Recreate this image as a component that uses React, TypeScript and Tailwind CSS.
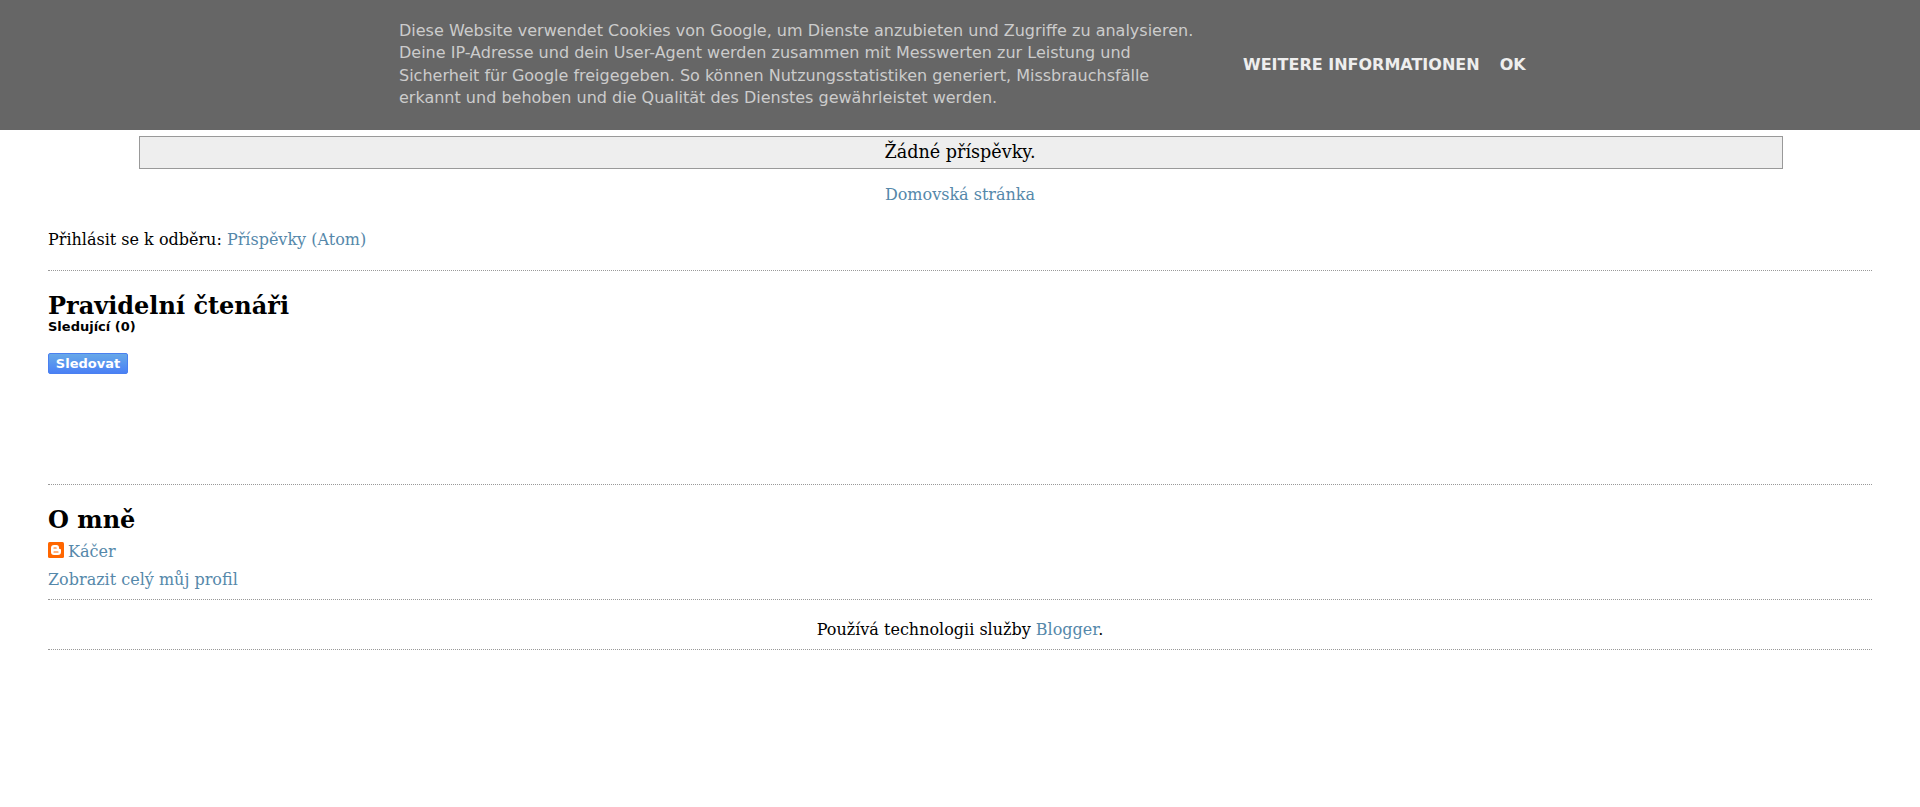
import React from 'react';

const link = 'text-[#5588aa]';

export default function App() {
  return (
    <div className="font-['DejaVu_Serif',serif] text-[16px] leading-[19px] text-black bg-white min-h-[807px]">
      <header className="h-[130px] bg-[#666] flex justify-center font-['DejaVu_Sans',sans-serif] text-[#ccc]">
        <div className="flex w-[1128px] items-start pl-[3px] pt-5">
          <p className="w-[844px] shrink-0 whitespace-nowrap leading-[22.4px]">
            Diese Website verwendet Cookies von Google, um Dienste anzubieten und Zugriffe zu analysieren.<br />
            Deine IP-Adresse und dein User-Agent werden zusammen mit Messwerten zur Leistung und<br />
            Sicherheit für Google freigegeben. So können Nutzungsstatistiken generiert, Missbrauchsfälle<br />
            erkannt und behoben und die Qualität des Dienstes gewährleistet werden.
          </p>
          <nav className="mt-[34.6px] flex gap-5 font-bold text-[#eee] whitespace-nowrap">
            <a>WEITERE INFORMATIONEN</a>
            <a>OK</a>
          </nav>
        </div>
      </header>
      <main className="px-12">
        <div className="mt-[6px] ml-[91px] mr-[89px] pr-[2px] h-[33px] border border-[#999] bg-[#eee] flex items-center justify-center text-[17.6px]">Žádné příspěvky.</div>
        <div className={`mt-4 text-center ${link}`}>Domovská stránka</div>
        <div className="mt-[26px]">Přihlásit se k odběru: <a className={link}>Příspěvky (Atom)</a></div>
        <section className="mt-[21px] h-[214px] border-t border-dotted border-[#999] pt-[21px]">
          <h2 className="text-[24px] leading-[28px] font-bold">Pravidelní čtenáři</h2>
          <div className="-mt-px font-['DejaVu_Sans',sans-serif] text-[13px] leading-[16px] font-bold">Sledující (0)</div>
          <button className="mt-[18px] block h-[21px] w-[80px] rounded-[2px] border border-[#4a80f0] bg-linear-to-b from-[#68a8e8] to-[#4a80f5] font-['DejaVu_Sans',sans-serif] text-[13px] leading-[19px] font-bold text-white">Sledovat</button>
        </section>
        <section className="h-[115px] border-t border-dotted border-[#999] pt-[21px]">
          <h2 className="text-[24px] leading-[28px] font-bold">O mně</h2>
          <a className={`mt-[8px] flex items-start gap-1 ${link}`}>
            <svg width="16" height="16" viewBox="0 0 16 16"><rect width="16" height="16" rx="1.5" fill="#f60" /><path d="M6 3h2.5A2.5 2.5 0 0 1 11 5.5c0 1.3.3 1.5 1.2 1.5q.8 0 .8 1v2a3 3 0 0 1-3 3H6a3 3 0 0 1-3-3V6a3 3 0 0 1 3-3z" fill="#fff" /><path d="M6 6h2.2M6 10h4" stroke="#f60" strokeWidth="1.2" strokeLinecap="round" /></svg>
            Káčer
          </a>
          <a className={`mt-[9px] block ${link}`}>Zobrazit celý můj profil</a>
        </section>
        <footer className="h-[51px] border-y border-dotted border-[#999] pt-[20px] text-center">Používá technologii služby <a className={link}>Blogger</a>.</footer>
      </main>
    </div>
  );
}
